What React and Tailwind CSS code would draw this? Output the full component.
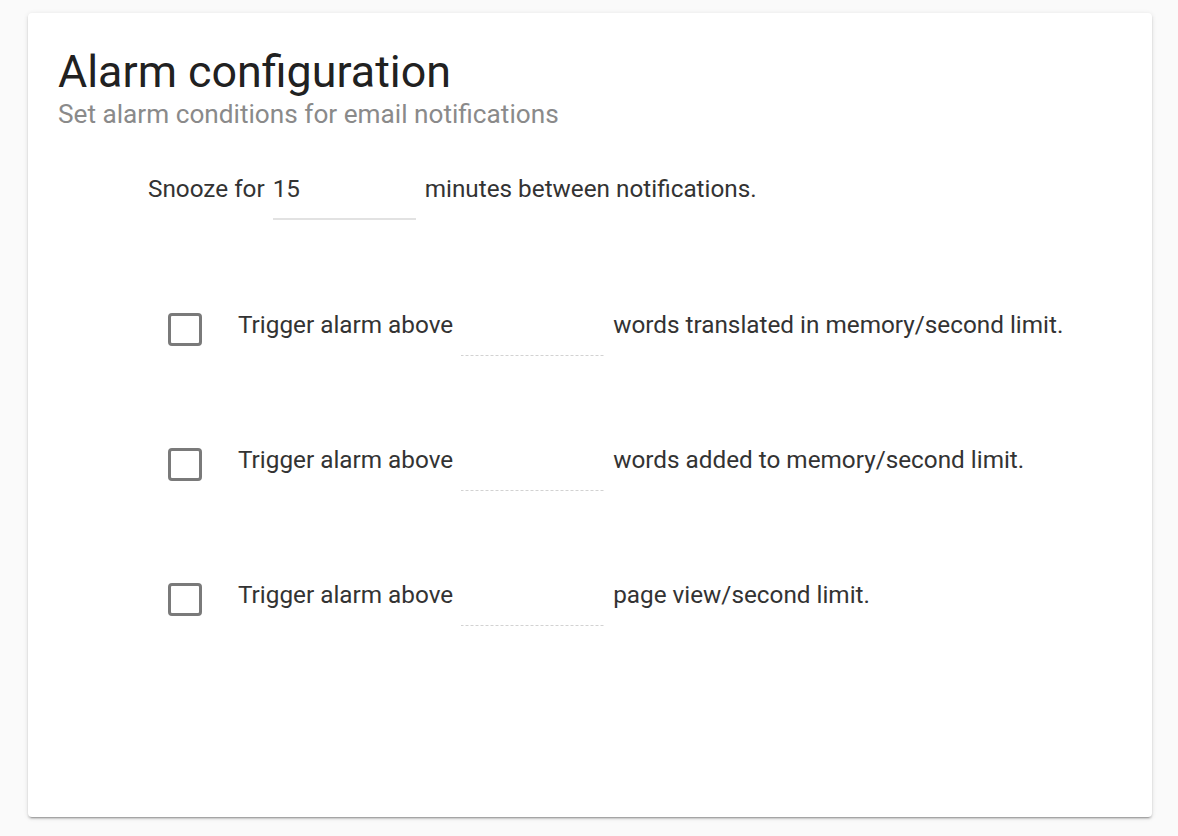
import React from "react";

function Checkbox() {
  return (
    <div className="w-[34px] h-[33px] shrink-0 rounded-[4px] border-[3px] border-[#7a7a7a] bg-white" />
  );
}

function DottedInput() {
  return (
    <div className="w-[144px] h-[47px] shrink-0 bg-[linear-gradient(to_right,#d2d2d2_60%,transparent_0)] bg-[length:5px_1px] bg-repeat-x bg-bottom" />
  );
}

function TriggerRow({ label }) {
  return (
    <div className="flex items-start h-[135px]">
      <div className="pt-[4px]">
        <Checkbox />
      </div>
      <span className="ml-[36px] text-[#333333]">Trigger alarm above</span>
      <div className="ml-[8px]">
        <DottedInput />
      </div>
      <span className="ml-[8px] text-[#333333]">{label}</span>
    </div>
  );
}

export default function App() {
  return (
    <div className="min-h-[836px] w-[1178px] bg-[#fafafa] pt-[13px] font-['Roboto',sans-serif]">
      <div className="ml-[28px] w-[1124px] h-[804px] rounded-[4px] bg-white shadow-[0_3px_1px_-2px_rgba(0,0,0,0.2),0_2px_2px_0_rgba(0,0,0,0.14),0_1px_5px_0_rgba(0,0,0,0.12)] px-[30px] pt-[33px]">
        <h1 className="text-[44.8px] leading-[52px] text-[#212121] font-normal">Alarm configuration</h1>
        <p className="mt-[2px] text-[26.2px] leading-[28px] text-[#8a8a8a]">Set alarm conditions for email notifications</p>

        <div className="ml-[90px] mt-[45px] flex items-start text-[24.3px] leading-[32px] text-[#333333]">
          <span>Snooze for</span>
          <div className="ml-[8px] w-[143px] h-[47px] border-b-[2px] border-[#e2e2e2]">
            <span>15</span>
          </div>
          <span className="ml-[9px]">minutes between notifications.</span>
        </div>

        <div className="ml-[110px] mt-[89px] flex flex-col text-[24.3px] leading-[32px]">
          <TriggerRow label="words translated in memory/second limit." />
          <TriggerRow label="words added to memory/second limit." />
          <TriggerRow label="page view/second limit." />
        </div>
      </div>
    </div>
  );
}
